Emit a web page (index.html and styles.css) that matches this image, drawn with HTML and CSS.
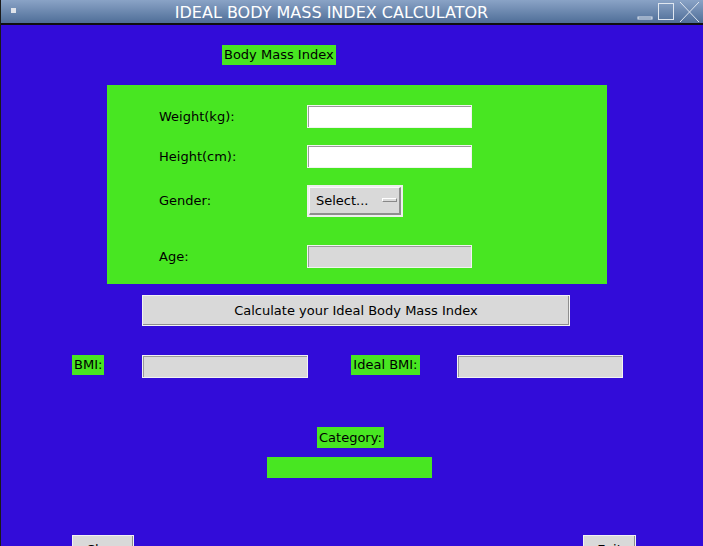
FILE: index.html
```html
<!DOCTYPE html>
<html>
<head>
<meta charset="utf-8">
<link rel="stylesheet" href="styles.css">
</head>
<body>
<div class="window">
  <div class="titlebar">
    <span class="app-icon"></span>
    <span class="title">IDEAL BODY MASS INDEX CALCULATOR</span>
    <div class="controls">
      <svg width="66" height="22" viewBox="0 0 66 22">
        <rect x="1" y="16" width="14" height="2" fill="none" stroke="#dfe6ef" stroke-width="1"/>
        <rect x="21.5" y="2.5" width="15" height="16" fill="none" stroke="#dfe6ef" stroke-width="1"/>
        <path d="M43 1 L62 21 M62 1 L43 21" stroke="#dfe6ef" stroke-width="1" fill="none"/>
      </svg>
    </div>
  </div>
  <div class="client">
    <div class="heading"><span class="lbl">Body Mass Index</span></div>
    <div class="frame">
      <div class="row r1"><span class="flabel">Weight(kg):</span><span class="entry white"></span></div>
      <div class="row r2"><span class="flabel">Height(cm):</span><span class="entry white"></span></div>
      <div class="row r3"><span class="flabel">Gender:</span><span class="optmenu"><span class="optin">Select...<span class="ind"></span></span></span></div>
      <div class="row r4"><span class="flabel">Age:</span><span class="entry"></span></div>
    </div>
    <div class="calc-wrap"><span class="btn calc">Calculate your Ideal Body Mass Index</span></div>
    <div class="results">
      <span class="lbl bmi-l">BMI:</span>
      <span class="entry bmi-e"></span>
      <span class="lbl ibmi-l">Ideal BMI:</span>
      <span class="entry ibmi-e"></span>
    </div>
    <div class="cat"><span class="lbl">Category:</span></div>
    <div class="catbar"><span class="bar"></span></div>
    <div class="bottom">
      <span class="btn small clear">Clear</span>
      <span class="btn small exit">Exit</span>
    </div>
  </div>
</div>
</body>
</html>
```
FILE: styles.css
```css
html, body {
  margin: 0;
  padding: 0;
  overflow: hidden;
}
body {
  width: 703px;
  height: 546px;
  font-family: "DejaVu Sans", sans-serif;
  font-size: 13px;
  color: #000;
}
.window {
  width: 703px;
  height: 546px;
  box-sizing: border-box;
  border-left: 1px solid #1a1a1a;
  background: #320cd9;
  overflow: hidden;
}
.titlebar {
  height: 23px;
  border-bottom: 2px solid #101010;
  background: linear-gradient(#8aa3c6, #4f6e98);
  display: flex;
  align-items: center;
  position: relative;
}
.app-icon {
  width: 5px;
  height: 5px;
  background: #dfe3ea;
  margin-left: 10px;
  margin-top: -2px;
}
.title {
  flex: 1;
  text-align: center;
  color: #fff;
  font-size: 16px;
  margin-left: 10px;
  margin-top: 1px;
}
.controls {
  width: 66px;
  height: 22px;
  margin-right: 0;
  display: flex;
}
.client {
  display: flex;
  flex-direction: column;
}
.lbl {
  background: #48e622;
  display: inline-block;
  line-height: 20px;
  padding: 0 2px;
}
.heading {
  padding-top: 20px;
  padding-left: 221px;
  height: 20px;
}
.frame {
  margin-top: 20px;
  margin-left: 106px;
  width: 500px;
  height: 199px;
  box-sizing: border-box;
  background: #48e622;
  padding-top: 20px;
  display: flex;
  flex-direction: column;
}
.row {
  display: flex;
  align-items: center;
  padding-left: 52px;
}
.flabel {
  width: 148px;
  margin-top: -1px;
}
.r2 { margin-top: 17px; }
.r3 { margin-top: 17px; }
.r4 { margin-top: 28px; }
.entry {
  display: inline-block;
  width: 165px;
  height: 23px;
  box-sizing: border-box;
  background: #d9d9d9;
  border: 1px solid #f2f2f2;
  box-shadow: inset 1px 1px 0 #9a9a9a;
}
.entry.white {
  background: #fff;
}
.optmenu {
  display: inline-block;
  width: 96px;
  height: 32px;
  box-sizing: border-box;
  border: 2px solid #eeeeee;
  background: #d9d9d9;
}
.optin {
  display: flex;
  align-items: center;
  height: 28px;
  box-sizing: border-box;
  border-top: 1px solid #fafafa;
  border-left: 1px solid #fafafa;
  border-bottom: 2px solid #8e8e8e;
  border-right: 2px solid #8e8e8e;
  padding-left: 6px;
  padding-bottom: 1px;
}
.ind {
  display: inline-block;
  width: 15px;
  height: 4px;
  box-sizing: border-box;
  margin-left: 13px;
  background: #d9d9d9;
  border-top: 1px solid #fff;
  border-left: 1px solid #fff;
  border-bottom: 1px solid #888;
  border-right: 1px solid #888;
}
.btn {
  display: inline-flex;
  align-items: center;
  justify-content: center;
  box-sizing: border-box;
  background: #d9d9d9;
  border: 1px solid #f2f2f2;
  box-shadow: inset -1px -1px 0 #8e8e8e;
}
.calc-wrap {
  margin-top: 11px;
  padding-left: 141px;
}
.calc {
  width: 428px;
  height: 31px;
}
.results {
  margin-top: 29px;
  display: flex;
  align-items: flex-start;
  height: 23px;
}
.bmi-l { margin-left: 71px; }
.bmi-e { margin-left: 38px; width: 166px; }
.ibmi-l { margin-left: 43px; }
.ibmi-e { margin-left: 37px; width: 166px; }
.cat {
  margin-top: 49px;
  padding-left: 316px;
  height: 21px;
}
.cat .lbl { line-height: 21px; }
.catbar {
  margin-top: 9px;
  padding-left: 266px;
  height: 21px;
}
.bar {
  display: block;
  width: 165px;
  height: 21px;
  background: #48e622;
}
.bottom {
  margin-top: 57px;
  display: flex;
}
.small {
  height: 30px;
  align-items: flex-start;
  padding-top: 6px;
}
.clear {
  margin-left: 71px;
  width: 62px;
}
.exit {
  margin-left: 449px;
  width: 53px;
}
```
